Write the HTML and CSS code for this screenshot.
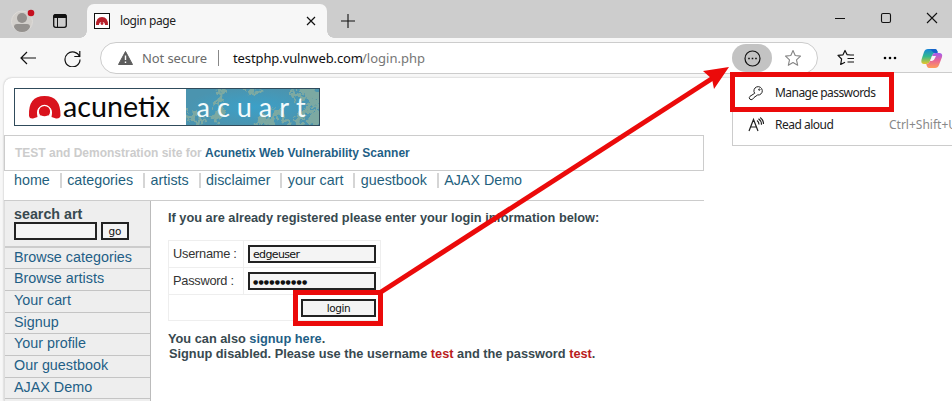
FILE: index.html
```html
<!DOCTYPE html>
<html lang="en">
<head>
<meta charset="utf-8">
<title>login page</title>
<link rel="stylesheet" href="styles.css">
</head>
<body>
<header class="tabs">
  <svg class="profile" width="26" height="28" viewBox="0 0 26 28"><circle cx="12" cy="14.500" r="10.500" fill="#d2cfcb" stroke="#dedbd8"/><circle cx="12" cy="11" r="5" fill="#94918e"/><path d="M4 20q0-3 3-3h10q3 0 3 3q-2 5-8 5t-8-5z" fill="#94918e"/><circle cx="21" cy="6" r="3.300" fill="#c50f1f"/></svg>
  <svg class="workspaces" width="16" height="16" viewBox="0 0 16 16"><rect x="1.700" y="1.700" width="12.600" height="12.600" rx="2" fill="none" stroke="#111" stroke-width="1.300"/><path d="M1.500 5V3q0-2 2-2h9q2 0 2 2v2z" fill="#111"/><path d="M5.500 5v9" stroke="#111"/></svg>
  <div class="tab">
    <svg class="favicon" width="16" height="16" viewBox="0 0 16 16"><rect x=".5" y=".5" width="15" height="15" fill="#fff" stroke="#111"/><path d="M2 12q0-8 6-8t6 8h-3q0-3-3-3t-3 3z" fill="#b61f2a"/><circle cx="8" cy="10.500" r="1.400" fill="#b61f2a"/></svg>
    <span class="tab-title">login page</span>
    <svg class="close" width="10" height="10" viewBox="0 0 10 10"><path d="M1 1l8 8M9 1l-8 8" stroke="#111" stroke-width="1.200"/></svg>
  </div>
  <svg class="newtab" width="14" height="14" viewBox="0 0 14 14"><path d="M7 0v14M0 7h14" stroke="#111" stroke-width="1.100"/></svg>
  <svg class="window" width="103" height="12" viewBox="0 0 103 12" fill="none" stroke="#111" stroke-width="1.100"><path d="M0 6.500h10M92 1l10 10M102 1L92 11"/><rect x="46.500" y="1.500" width="9" height="9" rx="1.500"/></svg>
</header>
<div class="toolbar">
  <svg class="back" width="16" height="14" viewBox="0 0 16 14" fill="none" stroke="#111" stroke-width="1.200"><path d="M16 7H1M7 1L1 7l6 6"/></svg>
  <svg class="reload" width="17" height="17" viewBox="0 0 17 17" fill="none" stroke="#111" stroke-width="1.200"><path d="M15.600 7A7.500 7.500 0 1 0 16 9.500M15.800 1v5.500h-5.500"/></svg>
  <div class="address">
    <svg class="warning" width="15" height="14" viewBox="0 0 15 14"><path d="M7.500 0.500L14.500 13.500H.5z" fill="#5d5d5d" stroke="#5d5d5d" stroke-linejoin="round"/><path d="M7.500 4.500v4.500M7.500 10.500v1.500" stroke="#fff" stroke-width="1.400"/></svg>
    <span class="insecure">Not secure</span><i class="divider"></i>
    <span class="host">testphp.vulnweb.com</span><span class="path">/login.php</span>
    <div class="more"><svg width="17" height="17" viewBox="0 0 17 17"><circle cx="8.500" cy="8.500" r="7.500" fill="none" stroke="#111" stroke-width="1.200"/><path d="M4.200 8.500h1.600m1.900 0h1.600m1.900 0h1.600" stroke="#111" stroke-width="1.600"/></svg></div>
    <svg class="star" width="18" height="18" viewBox="0 0 18 18"><path d="M9 1.500l2.200 5 5.300.6-4 3.700 1.200 5.500L9 13.600l-4.700 2.700 1.200-5.500-4-3.700 5.300-.6z" fill="none" stroke="#858585" stroke-width="1.100" stroke-linejoin="round"/></svg>
  </div>
  <svg class="favorites" width="18" height="18" viewBox="0 0 18 18" fill="none" stroke="#111" stroke-width="1.200" stroke-linejoin="round"><path d="M13.500 6l-3.500-.4L8 1.500l-2 4.300-5 .6 3.600 3.600L3.700 15.500 8 13.200M11 6h6M10.500 9.500H17M10.500 13H17"/></svg>
  <svg class="dots" width="14" height="4" viewBox="0 0 14 4"><circle cx="2" cy="2" r="1.300"/><circle cx="7" cy="2" r="1.300"/><circle cx="12" cy="2" r="1.300"/></svg>
  <svg class="copilot" width="22" height="21" viewBox="0 0 22 21"><defs><linearGradient id="c1" x2="0" y2="1"><stop stop-color="#1687d9"/><stop offset=".5" stop-color="#33b98c"/><stop offset="1" stop-color="#e9c62a"/></linearGradient><linearGradient id="c2" x2="0" y2="1"><stop stop-color="#a45bf0"/><stop offset=".5" stop-color="#e86595"/><stop offset="1" stop-color="#ff9d58"/></linearGradient></defs><path d="M7 1h7q2 0 2.800 3L14 5q-2 0-3 3l-2 5q-1 3-3 3H3q-4 0-2-6l2-6q1-3 4-3z" fill="url(#c1)"/><path d="M14 5h4q4 0 3 4l-3 8q-1 3-4 3H8q-2 0-2.700-4Q8 16 9 13l2-5q1-3 3-3z" fill="url(#c2)"/><path d="M7 1h7q2 0 2.800 4H14q-2 0-3-2-1-2-4-2z" fill="#1762c9"/><path d="M11 8l-2 5h2q2 0 3-3l1-2z" fill="#f7f7f7"/></svg>
</div>
<main class="page">
  <svg class="logo" width="306" height="38" viewBox="0 0 306 38">
    <defs>
      <filter id="coral" x="-.1" y="-.3" width="1.200" height="1.600"><feTurbulence type="fractalNoise" baseFrequency=".16" numOctaves="4" seed="5"/><feDisplacementMap in="SourceGraphic" scale="16" xChannelSelector="R" yChannelSelector="G"/></filter>
      <clipPath id="art"><rect x="172" width="134" height="38"/></clipPath>
      <radialGradient id="sea"><stop stop-color="#3ba0c8"/><stop offset="1" stop-color="#4b94af"/></radialGradient>
    </defs>
    <rect width="306" height="38" fill="#fff"/><rect x="172" width="134" height="38" fill="url(#sea)"/>
    <g clip-path="url(#art)"><g filter="url(#coral)" fill="none" stroke="#7ca9a2" stroke-width="5"><path d="M200 -3L209 8 202 17 208 26 200 33M170 31L180 25 187 34 180 43M232 -3L238 5 246 2M243 40L249 30 257 35 262 24 270 31 278 40M276 0L282 10 292 5 299 13 293 22 302 30M299 -3L305 9 302 20 306 38M288 38L284 28 293 22"/><path stroke-width="9" d="M286 -2L303 7M297 36L305 25"/></g></g>
    <path d="M15 28Q14 8 30.500 8T46.500 28Q45.500 31 42 30.500L37.500 29Q40 18 30.500 18T23.500 29L19 30.500Q15.500 31 15 28z" fill="#d9131d"/><circle cx="30.500" cy="23.500" r="6.200" fill="#d9131d" stroke="#fff" stroke-width="1.200"/><path d="M23 31l4-3.500h7l4 3.500z" fill="#fff"/><circle cx="30.500" cy="24.500" r="3.800" fill="#d9131d"/>
    <text class="logo-text" x="49" y="28.500" textLength="107" lengthAdjust="spacingAndGlyphs">acunetix</text><text class="art-text" x="182.500" y="28.500">acuart</text>
    <rect x=".5" y=".5" width="305" height="37" fill="none" stroke="#304b5b"/>
  </svg>
  <div class="banner"><span class="banner-grey">TEST and Demonstration site for</span> <span class="banner-link">Acunetix Web Vulnerability Scanner</span></div>
  <nav class="nav"><a>home</a><a>categories</a><a>artists</a><a>disclaimer</a><a>your cart</a><a>guestbook</a><a>AJAX Demo</a></nav>
  <div class="columns">
    <aside class="sidebar">
      <div class="search"><h3>search art</h3><div class="search-row"><span class="field"></span><span class="button">go</span></div></div>
      <a>Browse categories</a><a>Browse artists</a><a>Your cart</a><a>Signup</a><a>Your profile</a><a>Our guestbook</a><a>AJAX Demo</a>
    </aside>
    <section class="content">
      <p class="intro">If you are already registered please enter your login information below:</p>
      <div class="form">
        <div class="label">Username :</div><div class="cell"><div class="field">edgeuser</div></div>
        <div class="label">Password :</div><div class="cell"><div class="field secret">●●●●●●●●●●</div></div>
        <div class="submit"><span class="button">login</span></div>
      </div>
      <p class="also">You can also <a>signup here</a>.</p>
      <p class="disabled">Signup disabled. Please use the username <b>test</b> and the password <b>test</b>.</p>
    </section>
  </div>
</main>
<div class="menu">
  <div class="item"><svg width="16" height="16" viewBox="0 0 16 16" fill="none" stroke="#222" stroke-width="1" stroke-linejoin="round"><path d="M6.700 8.300A4.200 4.200 0 1 1 9.500 10L6 12.500 4.500 14.300q-1.500 1-2.800-.3-1-1.500.3-2.700z"/><circle cx="11.300" cy="4.600" r=".7"/></svg><span class="manage">Manage passwords</span></div>
  <div class="item"><svg width="16" height="16" viewBox="0 0 16 16" fill="none" stroke="#222" stroke-width="1.200"><path d="M1 14L5.500 2.500 10 14M2.500 10h6M9 3.500q2 1.500 2 4M10.500 1.800q3 2 3 6M12.200.5Q15.500 3 15.500 7"/></svg><span class="read">Read aloud</span><span class="shortcut">Ctrl+Shift+U</span></div>
</div>
<svg class="annotations" width="952" height="401" viewBox="0 0 952 401"><g fill="none" stroke="#eb0a0a" stroke-width="5"><rect x="295.500" y="292.500" width="85" height="31"/><rect x="732.500" y="74.500" width="159" height="35"/><path d="M381 292L716 76"/></g><path d="M729 67L714 89 712 79 703 71z" fill="#eb0a0a"/></svg>
</body>
</html>
```

FILE: styles.css
```css
* { box-sizing: border-box; }
body { margin: 0; width: 952px; height: 401px; overflow: hidden; background: #f7f7f7; font-family: "Liberation Sans", Arial, sans-serif; color: #38494f; position: relative; }
svg { display: block; flex: none; }
p, h3 { margin: 0; white-space: nowrap; }
.tabs { height: 38px; background: #cdcdcd; display: flex; align-items: flex-start; font-family: "Noto Sans", sans-serif; }
.profile { margin: 7px 0 0 10px; }
.workspaces { margin: 13px 0 0 16px; }
.tab { width: 240px; height: 34px; margin: 4px 0 0 19px; background: #f7f7f7; border-radius: 7px 7px 0 0; display: flex; align-items: center; padding: 0 11px 0 7px; position: relative; }
.tab::before, .tab::after { content: ""; position: absolute; bottom: 0; width: 7px; height: 7px; }
.tab::before { left: -7px; background: radial-gradient(circle at 0 0, #cdcdcd 6.5px, #f7f7f7 7px); }
.tab::after { right: -7px; background: radial-gradient(circle at 100% 0, #cdcdcd 6.5px, #f7f7f7 7px); }
.tab-title { font-size: 12px; line-height: 16px; margin-left: 10px; color: #222; width: 186px; flex: none; letter-spacing: -.4px; }
.newtab { margin: 14px 0 0 14px; }
.window { margin: 12px 14px 0 auto; }
.toolbar { height: 40px; display: flex; align-items: center; font-family: "Noto Sans", sans-serif; }
.back { margin-left: 20px; }
.reload { margin-left: 28px; }
.address { width: 718px; height: 32px; margin-left: 19px; border: 1px solid #ccc; border-radius: 16px; background: #fff; display: flex; align-items: center; font-size: 13px; white-space: nowrap; }
.warning { margin-left: 17px; }
.insecure { width: 66px; margin-left: 9px; color: #6b6b6b; letter-spacing: -.1px; }
.divider { width: 1px; height: 16px; margin: 0 14px 0 10px; background: #888; }
.host { width: 129px; color: #111; letter-spacing: -.1px; }
.path { color: #767676; }
.more { width: 40px; height: 28px; margin-left: auto; border-radius: 14px; background: #c3c3c3; display: flex; align-items: center; justify-content: center; }
.star { margin: 0 15px 0 12px; }
.favorites { margin-left: 19px; }
.dots { margin-left: 28px; }
.copilot { margin-left: 24px; }
.page { margin-left: 4px; width: 948px; height: 323px; background: #fff; border-radius: 8px 0 0 0; box-shadow: 0 0 2px #aaa; overflow: hidden; }
.logo { margin: 10px 0 9px 10px; overflow: visible; }
.logo-text { font: 28px "Lato", sans-serif; fill: #080808; }
.art-text { font: 27px "Lato", sans-serif; letter-spacing: 7px; fill: #f3fbfc; }
.banner { width: 700px; height: 36px; border: 1px solid #ccc; padding-left: 10px; font-size: 12px; font-weight: bold; line-height: 35px; white-space: nowrap; display: flex; }
.banner-grey { color: #ccc; width: 190px; }
.banner-link { color: #1f5f86; }
.nav { width: 700px; height: 30px; border-bottom: 1px solid #ccc; padding: 2px 0 0 10px; display: flex; font-size: 14.3px; line-height: 15px; color: #1f5f7d; }
.nav a { padding-right: 10px; margin-right: 5.4px; border-right: 2px solid #d5d5d5; height: 15px; white-space: nowrap; }
.nav a:last-child { border: 0; }
.columns { display: flex; height: 201px; }
.sidebar { width: 147px; border-right: 1px solid #bbb; border-left: 1px solid #ddd; background: #eee; font-size: 14.35px; color: #1f5f86; }
.sidebar a { display: block; height: 21.7px; line-height: 19px; padding-left: 9px; border-bottom: 1px solid #c4c4c4; white-space: nowrap; }
.search { height: 46.500px; padding: 6px 0 0 9px; border-bottom: 2px solid #ccc; }
.search h3 { font-size: 14.3px; line-height: 15px; color: #38494f; }
.search-row { display: flex; gap: 4px; }
.field, .button { height: 18px; border: 2px solid #222; background: #f4f4f4; color: #111; font: 11px/14px "DejaVu Sans", sans-serif; }
.search .field { width: 83px; }
.search .button { width: 28px; font-size: 10.5px; line-height: 15px; text-align: center; }
.content { padding: 9px 0 0 17px; font-size: 12.78px; font-weight: bold; }
.intro { line-height: 16px; height: 30px; }
.form { width: 213px; display: grid; grid-template-columns: 75px 137px; grid-template-rows: 27px 27px 27px; border: solid #eee; border-width: 0 0 0 1px; font-weight: normal; font-size: 12.8px; }
.form > div { border: solid #eee; border-width: 1px 1px 0 0; }
.label { padding-left: 4px; line-height: 25px; color: #333; letter-spacing: -.25px; }
.cell { padding: 4px; }
.form .field { width: 128px; padding-left: 3px; line-height: 15px; letter-spacing: -.65px; }
.form .field.secret { font-size: 6px; line-height: 15px; letter-spacing: .2px; }
.form .submit { grid-column: 1 / 3; border-bottom-width: 1px; padding: 4px 4px 0 0; display: flex; justify-content: flex-end; }
.submit .button { width: 75px; font-size: 10.5px; line-height: 15px; letter-spacing: -.4px; text-align: center; }
.also { line-height: 15px; margin-top: 10px; }
.also a { color: #1f5f86; }
.disabled { line-height: 15px; padding-left: 1px; }
.disabled b { color: #b91c20; }
.menu { position: absolute; left: 732px; top: 72px; width: 240px; height: 74px; border: 1px solid #ccc; background: #fff; font: 12px/16px "Noto Sans", sans-serif; color: #222; padding-top: 4px; }
.item { height: 32px; padding-left: 15px; display: flex; align-items: center; white-space: nowrap; }
.item span { margin-left: 11px; }
.manage { width: 101px; letter-spacing: -.55px; }
.item .read { width: 103px; letter-spacing: -.5px; }
.shortcut { color: #888; }
.annotations { position: absolute; left: 0; top: 0; }
```
